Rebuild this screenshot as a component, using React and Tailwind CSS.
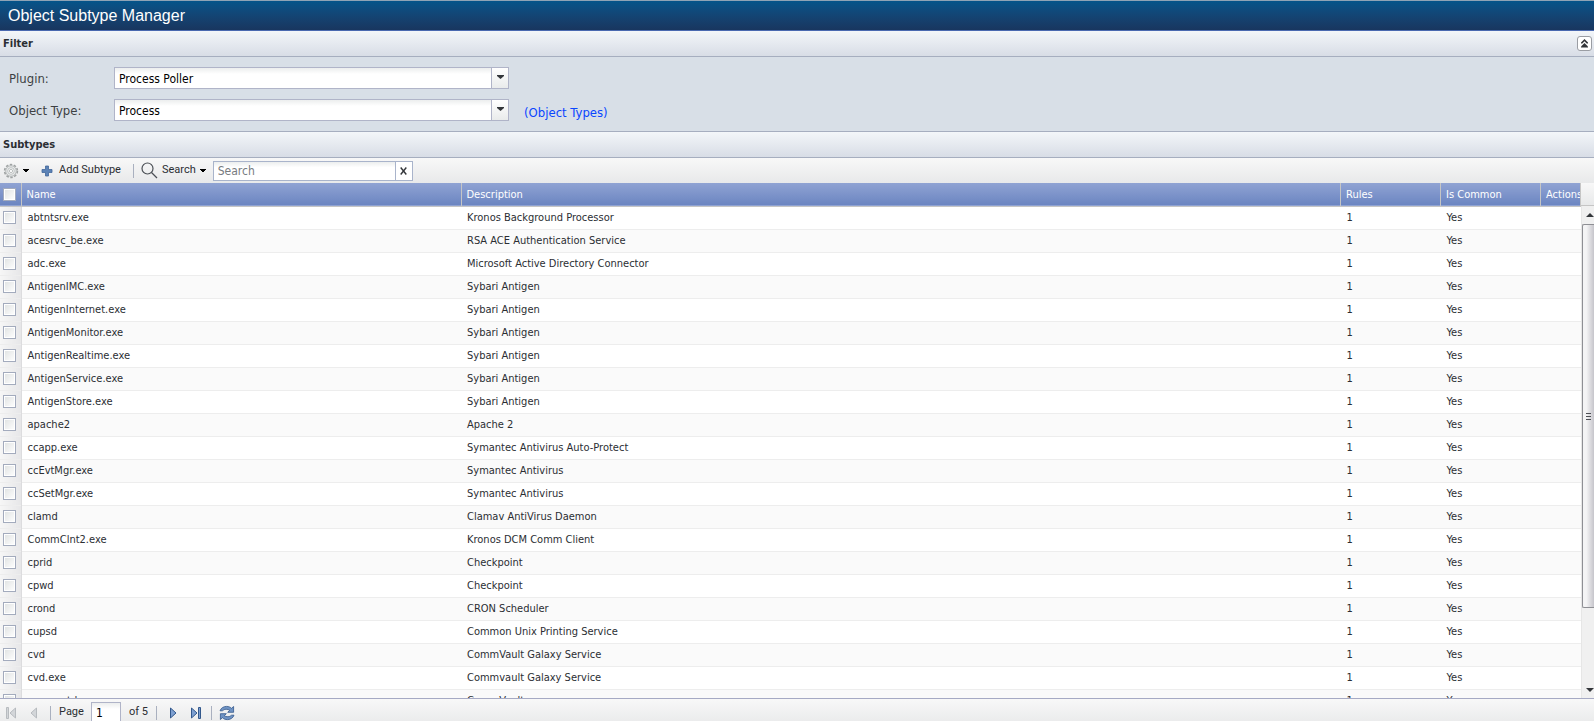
import { useState } from "react";

const subtypes = [
  { name: "abtntsrv.exe", description: "Kronos Background Processor" },
  { name: "acesrvc_be.exe", description: "RSA ACE Authentication Service" },
  { name: "adc.exe", description: "Microsoft Active Directory Connector" },
  { name: "AntigenIMC.exe", description: "Sybari Antigen" },
  { name: "AntigenInternet.exe", description: "Sybari Antigen" },
  { name: "AntigenMonitor.exe", description: "Sybari Antigen" },
  { name: "AntigenRealtime.exe", description: "Sybari Antigen" },
  { name: "AntigenService.exe", description: "Sybari Antigen" },
  { name: "AntigenStore.exe", description: "Sybari Antigen" },
  { name: "apache2", description: "Apache 2" },
  { name: "ccapp.exe", description: "Symantec Antivirus Auto-Protect" },
  { name: "ccEvtMgr.exe", description: "Symantec Antivirus" },
  { name: "ccSetMgr.exe", description: "Symantec Antivirus" },
  { name: "clamd", description: "Clamav AntiVirus Daemon" },
  { name: "CommClnt2.exe", description: "Kronos DCM Comm Client" },
  { name: "cprid", description: "Checkpoint" },
  { name: "cpwd", description: "Checkpoint" },
  { name: "crond", description: "CRON Scheduler" },
  { name: "cupsd", description: "Common Unix Printing Service" },
  { name: "cvd", description: "CommVault Galaxy Service" },
  { name: "cvd.exe", description: "Commvault Galaxy Service" },
  { name: "cvmountd", description: "CommVault" },
];

const checkboxClass =
  "block size-[13px] appearance-none border border-[#a3abbd] bg-linear-to-br from-[#dfe2e2] to-white shadow-[inset_0_0_0_1px_#fff] checked:bg-[#6b84bf]";

const headClass = "border-r border-[#c5c5c5] px-[5px] pt-[2px] pb-0 font-normal";

function Caret({ className }) {
  return (
    <svg width="6" height="4" viewBox="0 0 6 4" className={className} shapeRendering="crispEdges">
      <path d="M0 0h6L3 3.5z" fill="currentColor" />
    </svg>
  );
}

function GearIcon() {
  return (
    <svg width="16" height="16" viewBox="0 0 16 16" fill="none">
      <circle cx="8" cy="8" r="6.400" stroke="#9fa3a3" strokeWidth="1.600" strokeDasharray="2.500 1.521" />
      <circle cx="8" cy="8" r="5.300" fill="#e6e8e8" stroke="#a9adad" strokeWidth=".8" />
      <circle cx="8" cy="8" r="3.300" fill="#f6f7f7" stroke="#b3b7b7" strokeWidth=".8" />
      <circle cx="8" cy="8" r="1.600" fill="#fff" stroke="#a9adad" strokeWidth=".8" />
    </svg>
  );
}

function PlusIcon() {
  return (
    <svg width="12" height="12" viewBox="0 0 12 12">
      <path d="M4.500 1h3v3.500H11v3H7.500V11h-3V7.500H1v-3h3.500z" fill="#5b82b6" stroke="#43679b" strokeWidth=".8" />
    </svg>
  );
}

function SearchIcon() {
  return (
    <svg width="17" height="17" viewBox="0 0 17 17" fill="none" stroke="#4b4f55">
      <circle cx="6.500" cy="6.500" r="5.500" strokeWidth="1.200" />
      <path d="M10.500 10.500l5.500 5.500" strokeWidth="1.300" />
    </svg>
  );
}

function RefreshIcon() {
  return (
    <svg width="16" height="16" viewBox="0 0 16 16" fill="#6f93c4" stroke="#33588c" strokeWidth=".8" strokeLinejoin="round">
      <path d="M1 5.800C2 2.800 4.800 1.400 7.600 1.400c2 0 3.800.7 4.900 1.900L14.600 1.500v5.800H8.700l2-2C8.800 3.900 5.400 3.700 3.400 5.800z" />
      <path d="M15 10.200c-1 3-3.800 4.400-6.600 4.400-2 0-3.800-.7-4.900-1.900L1.400 14.500V8.700h5.900l-2 2c1.900 1.400 5.300 1.600 7.300-.5z" />
    </svg>
  );
}

function PanelHeader({ title, children }) {
  return (
    <header className="flex h-[26px] shrink-0 items-center justify-between border-b border-[#a6aebf] bg-linear-to-b from-[#f3f6f9] to-[#d8dde6] pr-[2px] pl-[3px]">
      <h2 className="pt-[2px] text-[11px] font-bold text-[#2b2e33]">{title}</h2>
      {children}
    </header>
  );
}

function Combo({ id, label, options, children }) {
  return (
    <div className="flex h-[22px] items-center text-[13px]">
      <label htmlFor={id} className="w-[105px] shrink-0 pt-[2px] text-[#3d3f43]">{label}</label>
      <div className="relative flex w-[395px] border border-[#b0b4c8]">
        <select
          id={id}
          className="h-5 w-full appearance-none bg-white bg-linear-to-b from-[#eceeee] to-white to-30% pt-px pl-1 text-xs text-black outline-none"
        >
          {options.map((option) => <option key={option}>{option}</option>)}
        </select>
        <span className="pointer-events-none absolute inset-y-0 right-0 flex w-[17px] justify-center border-l border-[#b0b4c8] bg-linear-to-b from-white to-[#e9ebeb] pt-[7px] text-[#33363a]">
          <svg width="7" height="4" viewBox="0 0 7 4">
            <path d="M0 0h7v1L3.500 4 0 1z" fill="currentColor" />
          </svg>
        </span>
      </div>
      {children}
    </div>
  );
}

function Separator() {
  return <span className="h-[14px] w-px bg-[#a9b0bf]" />;
}

export default function App() {
  const [selected, setSelected] = useState([]);
  const [search, setSearch] = useState("");
  const [open, setOpen] = useState(true);

  const rows = subtypes.filter((row) => row.name.toLowerCase().includes(search.toLowerCase()));

  function toggle(name) {
    setSelected(selected.includes(name) ? selected.filter((n) => n !== name) : [...selected, name]);
  }

  function toggleAll() {
    setSelected(selected.length === subtypes.length ? [] : subtypes.map((row) => row.name));
  }

  return (
    <main className="flex h-screen flex-col overflow-hidden bg-white font-['DejaVu_Sans_Condensed','DejaVu_Sans',sans-serif] text-[#2b2e33]">
      <div className="flex h-[31px] shrink-0 items-center border-t border-b border-t-[#8fa3b5] border-b-[#4a69b0] bg-linear-to-b from-[#04548a] to-[#18365f] px-2">
        <h1 className="pt-px font-['Liberation_Sans',sans-serif] text-base text-white">Object Subtype Manager</h1>
      </div>

      <PanelHeader title="Filter">
        <button
          type="button"
          aria-label="Collapse filter"
          onClick={() => setOpen(!open)}
          className="flex size-[15px] items-center justify-center rounded-[3px] border border-[#9a9da3] bg-white"
        >
          <svg width="9" height="9" viewBox="0 0 9 9" fill="#33363a">
            <path d="M4.500 0L8 3.500v1H6.700L4.500 2.300 2.300 4.500H1v-1z" />
            <path d="M4.500 4L8 7.500v1H1v-1z" />
          </svg>
        </button>
      </PanelHeader>

      {open && (
        <form className="flex shrink-0 flex-col gap-[10px] bg-[#d8dfe7] px-[9px] py-[10px]">
          <Combo id="plugin" label="Plugin:" options={["Process Poller"]} />
          <Combo id="object-type" label="Object Type:" options={["Process"]}>
            <a href="#object-types" className="pt-[6px] pl-[15px] text-[#0a46ff]">(Object Types)</a>
          </Combo>
        </form>
      )}

      <div className="shrink-0 border-t border-[#a6aebf]">
        <PanelHeader title="Subtypes" />
      </div>

      <div className="flex h-[25px] shrink-0 items-center bg-linear-to-b from-[#f8f8f8] to-[#e8e9ea] pl-[3px] font-[Roboto,sans-serif] text-[11px] text-[#2b2e33]">
        <button type="button" aria-label="Settings" className="flex items-center gap-1">
          <GearIcon />
          <Caret className="text-black" />
        </button>
        <button type="button" className="ml-3 flex items-center gap-[6px]">
          <PlusIcon />
          Add Subtype
        </button>
        <span className="ml-3 flex"><Separator /></span>
        <button type="button" className="ml-[7px] flex items-center gap-1">
          <SearchIcon />
          Search
          <Caret className="text-black" />
        </button>
        <div className="ml-[7px] flex h-5 w-[200px] border border-[#a9b4cb] font-['DejaVu_Sans_Condensed','DejaVu_Sans',sans-serif]">
          <input
            type="text"
            aria-label="Search subtypes"
            placeholder="Search"
            value={search}
            onChange={(e) => setSearch(e.target.value)}
            className="min-w-0 flex-1 bg-white bg-linear-to-b from-[#eceeee] to-white to-30% px-1 text-xs outline-none placeholder:text-[#777b80]"
          />
          <button
            type="button"
            aria-label="Clear search"
            onClick={() => setSearch("")}
            className="flex w-[17px] items-center justify-center border-l border-[#a9b4cb] bg-white"
          >
            <svg width="7" height="8" viewBox="0 0 7 8" stroke="#33363a" strokeWidth="1.400">
              <path d="M.7.5l5.600 7M6.300.5L.7 7.500" />
            </svg>
          </button>
        </div>
      </div>

      <section className="flex min-h-0 flex-1">
        <div className="min-w-0 flex-1 overflow-hidden">
          <table className="w-full table-fixed border-collapse text-[11px] leading-4">
            <colgroup>
              <col className="w-[21px]" />
              <col className="w-[440px]" />
              <col />
              <col className="w-[100px]" />
              <col className="w-[100px]" />
              <col className="w-10" />
            </colgroup>
            <thead>
              <tr className="h-[23px] border-b border-[#c5c5c5] bg-linear-to-b from-[#90a3d3] to-[#6b85c1] text-left text-white">
                <th className="border-r border-[#c5c5c5] p-0 pl-[3px]">
                  <input
                    type="checkbox"
                    aria-label="Select all"
                    checked={selected.length === subtypes.length}
                    onChange={toggleAll}
                    className={checkboxClass}
                  />
                </th>
                <th className={headClass}>Name</th>
                <th className={headClass}>Description</th>
                <th className={headClass}>Rules</th>
                <th className={headClass}>Is Common</th>
                <th className="overflow-hidden border-r border-[#c5c5c5] pt-[2px] pb-0 pl-[5px] font-normal">Actions</th>
              </tr>
            </thead>
            <tbody>
              {rows.map((row) => (
                <tr key={row.name} className="h-[23px] border-b border-[#ededed] even:bg-[#fafafa]">
                  <td className="border-r border-[#dcdcde] bg-linear-to-r from-[#f6f6f6] to-[#e6e6e8] p-0 pl-[3px]">
                    <input
                      type="checkbox"
                      aria-label={"Select " + row.name}
                      checked={selected.includes(row.name)}
                      onChange={() => toggle(row.name)}
                      className={checkboxClass}
                    />
                  </td>
                  <td className="px-[6px] py-0">{row.name}</td>
                  <td className="px-[6px] py-0">{row.description}</td>
                  <td className="px-[6px] py-0">1</td>
                  <td className="px-[6px] py-0">Yes</td>
                  <td className="p-0" />
                </tr>
              ))}
            </tbody>
          </table>
        </div>

        <div className="flex w-[13px] shrink-0 flex-col">
          <div className="h-[23px] shrink-0 border-b border-[#c5c5c5] bg-linear-to-b from-[#f8f8f8] to-[#e8e9ea]" />
          <div className="flex min-h-0 flex-1 flex-col overflow-hidden border-l border-[#e6e6e6] bg-[#f0f0f0]">
            <div className="flex h-[18px] shrink-0 items-center pl-1">
              <svg width="8" height="4" viewBox="0 0 8 4" className="shrink-0" fill="#33363a">
                <path d="M0 4l4-4 4 4z" />
              </svg>
            </div>
            <div className="flex h-[384px] items-center rounded-l-[2px] border-y border-l border-[#8e8f94] bg-linear-to-r from-[#f4f4f5] from-30% to-[#c6c5cb] px-[3px]">
              <div className="flex w-full flex-col gap-[2px]">
                <span className="h-px bg-[#4d4f54]" />
                <span className="h-px bg-[#4d4f54]" />
                <span className="h-px bg-[#4d4f54]" />
              </div>
            </div>
            <div className="mt-auto flex h-[17px] shrink-0 items-center pl-1">
              <svg width="8" height="4" viewBox="0 0 8 4" className="shrink-0" fill="#33363a">
                <path d="M0 0l4 4 4-4z" />
              </svg>
            </div>
          </div>
        </div>
      </section>

      <footer className="h-[23px] shrink-0 border-t border-[#a6aac4] bg-[#eff0f1]">
        <div className="flex h-[27px] items-center bg-linear-to-b from-[#f8f8f8] to-[#e8e9ea] pl-[6px] font-[Roboto,sans-serif] text-[11px]">
          <button type="button" aria-label="First page" disabled>
            <svg width="10" height="12" viewBox="0 0 10 12" fill="#d3d6d9" stroke="#b7bbbf">
              <path d="M.5.5h2v11h-2zM9.500 1v10L4 6z" />
            </svg>
          </button>
          <button type="button" aria-label="Previous page" disabled className="ml-[14px]">
            <svg width="7" height="12" viewBox="0 0 7 12" fill="#d3d6d9" stroke="#b7bbbf">
              <path d="M6.500 1v10L1 6z" />
            </svg>
          </button>
          <span className="ml-[13px] flex"><Separator /></span>
          <label htmlFor="page" className="ml-2">Page</label>
          <input
            id="page"
            type="text"
            defaultValue="1"
            className="ml-[7px] h-[22px] w-[30px] border border-[#b0b4c8] bg-white bg-linear-to-b from-[#eceeee] to-white to-30% px-1 font-['DejaVu_Sans_Condensed','DejaVu_Sans',sans-serif] text-xs text-black outline-none"
          />
          <span className="ml-2">of 5</span>
          <span className="ml-2 flex"><Separator /></span>
          <button type="button" aria-label="Next page" className="ml-[13px]">
            <svg width="7" height="12" viewBox="0 0 7 12" fill="#7d9fd0" stroke="#33588c">
              <path d="M.5 1v10L6 6z" />
            </svg>
          </button>
          <button type="button" aria-label="Last page" className="ml-[14px]">
            <svg width="10" height="12" viewBox="0 0 10 12" fill="#7d9fd0" stroke="#33588c">
              <path d="M7.500.5h2v11h-2zM.5 1v10L6 6z" />
            </svg>
          </button>
          <span className="ml-[10px] flex"><Separator /></span>
          <button type="button" aria-label="Refresh" className="ml-[7px]">
            <RefreshIcon />
          </button>
        </div>
      </footer>
    </main>
  );
}
